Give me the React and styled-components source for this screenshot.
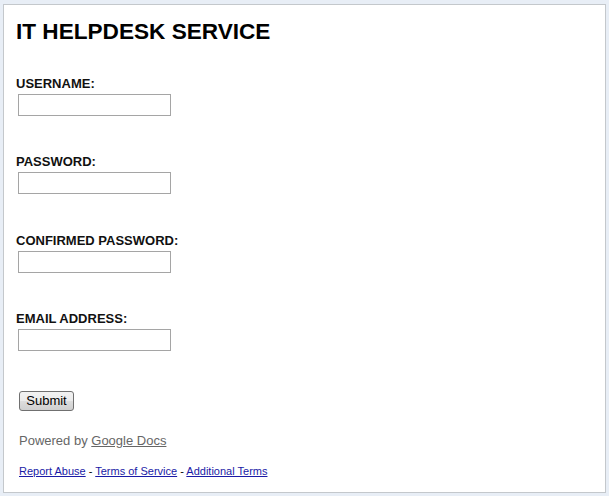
import React from 'react';
import styled, { createGlobalStyle } from 'styled-components';

const GlobalStyle = createGlobalStyle`
  html, body {
    margin: 0;
    padding: 0;
    background: #e8eef6;
  }
  body {
    font-family: 'Liberation Sans', Arial, sans-serif;
  }
`;

const Page = styled.div`
  padding: 4px 4px 4px 3px;
`;

const Panel = styled.div`
  box-sizing: border-box;
  width: 603px;
  height: 489px;
  border: 1px solid #c4c8cc;
  background: #fff;
  padding: 13px 12px 0;
  display: flex;
  flex-direction: column;
`;

const Title = styled.h1`
  margin: 0 0 30px;
  font-size: 22.6px;
  line-height: 28px;
  font-weight: bold;
  color: #000;
`;

const Field = styled.div`
  display: flex;
  flex-direction: column;
  align-items: flex-start;
  margin-bottom: 38.4px;
`;

const Label = styled.label`
  font-size: 13px;
  line-height: 16px;
  font-weight: bold;
  color: #111;
`;

const Input = styled.input`
  box-sizing: border-box;
  width: 153px;
  height: 22px;
  margin: 2px 0 0 2px;
  border: 1px solid #a5a5a5;
  background: #fff;
  padding: 1px 3px;
  font: 13px 'Liberation Sans', Arial, sans-serif;
  outline: none;
`;

const SubmitButton = styled.button`
  align-self: flex-start;
  box-sizing: border-box;
  height: 20px;
  width: 55px;
  margin: 1px 0 0 3px;
  padding: 0;
  border: 1px solid #707070;
  border-radius: 3px;
  background: linear-gradient(#f2f2f2 0%, #ebebeb 50%, #dddddd 51%, #cfcfcf 100%);
  font: 13px 'Liberation Sans', Arial, sans-serif;
  color: #000;
`;

const Powered = styled.div`
  margin: 22px 0 0 3px;
  font-size: 13px;
  line-height: 16px;
  color: #666;

  a {
    color: #666;
    text-decoration: underline;
  }
`;

const Footer = styled.div`
  margin: 15px 0 0 3px;
  font-size: 11px;
  line-height: 14px;
  color: #000;

  a {
    color: #1a1aa6;
    text-decoration: underline;
  }
`;

const fields = ['USERNAME:', 'PASSWORD:', 'CONFIRMED PASSWORD:', 'EMAIL ADDRESS:'];

export default function App() {
  return (
    <>
      <GlobalStyle />
      <Page>
        <Panel>
          <Title>IT HELPDESK SERVICE</Title>
          {fields.map((f, i) => (
            <Field key={f}>
              <Label htmlFor={`f${i}`}>{f}</Label>
              <Input id={`f${i}`} type={i === 1 || i === 2 ? 'password' : 'text'} />
            </Field>
          ))}
          <SubmitButton>Submit</SubmitButton>
          <Powered>
            Powered by <a href="#">Google Docs</a>
          </Powered>
          <Footer>
            <a href="#">Report Abuse</a> - <a href="#">Terms of Service</a> -{' '}
            <a href="#">Additional Terms</a>
          </Footer>
        </Panel>
      </Page>
    </>
  );
}
